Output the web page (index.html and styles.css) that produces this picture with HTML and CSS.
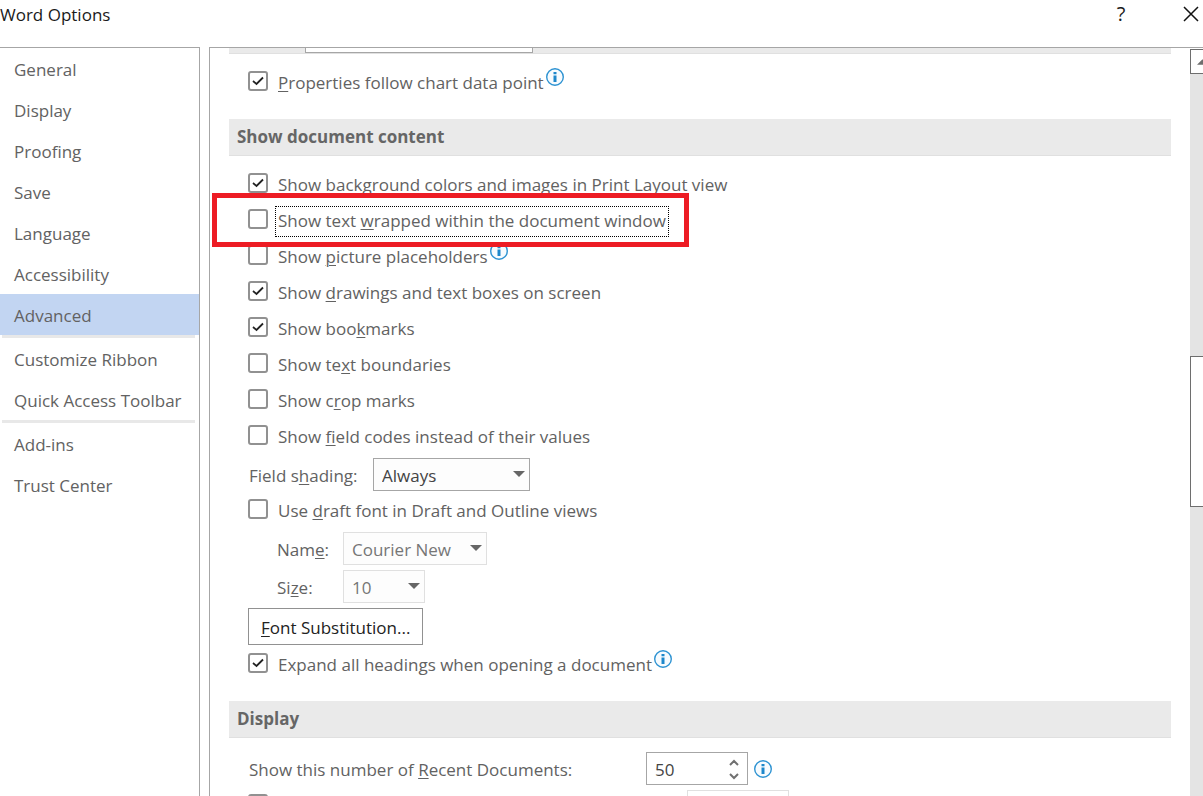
FILE: index.html
```html
<!DOCTYPE html>
<html lang="en">
<head>
	<meta charset="utf-8">
	<meta name="viewport" content="width=device-width, initial-scale=1">
	<title>Word Options</title>
	<link rel="stylesheet" href="styles.css">
</head>
<body>
	<!-- info icon, reused by every option that has a hint -->
	<svg class="defs" width="0" height="0" aria-hidden="true">
		<symbol id="info" viewBox="0 0 18 18">
			<circle cx="9" cy="9" r="8.3" fill="#f7fbfe" stroke="#2e93d2" stroke-width="1.4"/>
			<path d="M7.5 4h3v2.200h-3zM7.500 7.500h3v6.500h-3z" fill="#1e88cb"/>
		</symbol>
	</svg>

	<header class="titlebar">
		<h1 class="title">Word Options</h1>
		<button class="winbtn help" type="button" aria-label="Help">?</button>
		<button class="winbtn close" type="button" aria-label="Close">
			<svg width="16" height="16" viewBox="0 0 16 16"><path d="M1 1l14 14M15 1L1 15" stroke="#111" stroke-width="1.500" fill="none"/></svg>
		</button>
	</header>

	<div class="dialog">
		<!-- category list -->
		<nav class="sidebar">
			<a href="#general">General</a>
			<a href="#display">Display</a>
			<a href="#proofing">Proofing</a>
			<a href="#save">Save</a>
			<a href="#language">Language</a>
			<a href="#accessibility">Accessibility</a>
			<a href="#advanced" class="active">Advanced</a>
			<hr>
			<a href="#ribbon">Customize Ribbon</a>
			<a href="#toolbar">Quick Access Toolbar</a>
			<hr>
			<a href="#addins">Add-ins</a>
			<a href="#trust">Trust Center</a>
		</nav>

		<main class="panel">
			<div class="content">
				<!-- bottom edge of the previous section -->
				<div class="band"><div class="band-field"></div></div>
				<div class="row">
					<input type="checkbox" id="chart" checked>
					<label for="chart"><u>P</u>roperties follow chart data point</label>
					<svg class="info sup"><use href="#info"/></svg>
				</div>

				<h2>Show document content</h2>
				<div class="row">
					<input type="checkbox" id="background" checked>
					<label for="background">Show <u>b</u>ackground colors and images in Print Layout view</label>
				</div>
				<div class="row marked">
					<input type="checkbox" id="wrapped">
					<label for="wrapped" class="focused">Show text <u>w</u>rapped within the document window</label>
				</div>
				<div class="row">
					<input type="checkbox" id="picture">
					<label for="picture">Show <u>p</u>icture placeholders</label>
					<svg class="info sup"><use href="#info"/></svg>
				</div>
				<div class="row">
					<input type="checkbox" id="drawings" checked>
					<label for="drawings">Show <u>d</u>rawings and text boxes on screen</label>
				</div>
				<div class="row">
					<input type="checkbox" id="bookmarks" checked>
					<label for="bookmarks">Show boo<u>k</u>marks</label>
				</div>
				<div class="row">
					<input type="checkbox" id="boundaries">
					<label for="boundaries">Show te<u>x</u>t boundaries</label>
				</div>
				<div class="row">
					<input type="checkbox" id="crop">
					<label for="crop">Show c<u>r</u>op marks</label>
				</div>
				<div class="row">
					<input type="checkbox" id="codes">
					<label for="codes">Show <u>f</u>ield codes instead of their values</label>
				</div>
				<div class="field shading">
					<label for="shading">Field s<u>h</u>ading:</label>
					<span class="select"><select id="shading"><option>Always</option></select></span>
				</div>
				<div class="row">
					<input type="checkbox" id="draft">
					<label for="draft">Use <u>d</u>raft font in Draft and Outline views</label>
				</div>
				<div class="field indent">
					<label for="name">Nam<u>e</u>:</label>
					<span class="select name"><select id="name" disabled><option>Courier New</option></select></span>
				</div>
				<div class="field indent">
					<label for="size">Si<u>z</u>e:</label>
					<span class="select size"><select id="size" disabled><option>10</option></select></span>
				</div>
				<button class="font-btn" type="button"><u>F</u>ont Substitution...</button>
				<div class="row">
					<input type="checkbox" id="expand" checked>
					<label for="expand">Expand all headings when opening a document</label>
					<svg class="info sup"><use href="#info"/></svg>
				</div>

				<h2>Display</h2>
				<div class="field recent">
					<label for="recent">Show this number of <u>R</u>ecent Documents:</label>
					<span class="spinner">
						<input type="text" id="recent" value="50">
						<svg width="10" height="22" viewBox="0 0 10 22"><path d="M1 7l4-4 4 4M1 16l4 4 4-4" fill="none" stroke="#707070" stroke-width="2"/></svg>
					</span>
					<svg class="info"><use href="#info"/></svg>
				</div>
				<div class="row next">
					<input type="checkbox" id="quick" aria-label="Quick access">
					<input type="text" class="next-field" aria-label="Quick access count" disabled>
				</div>
			</div>

			<div class="scrollbar">
				<button class="arrow" type="button" aria-label="Scroll up">
					<svg width="12" height="6" viewBox="0 0 12 6"><path d="M0 6l6-6 6 6z" fill="#6e6e6e"/></svg>
				</button>
				<div class="track"><div class="thumb"></div></div>
			</div>
		</main>
	</div>
</body>
</html>
```

FILE: styles.css
```css
*, *::after {
	box-sizing: border-box;
}
body {
	margin: 0;
	height: 100vh;
	display: flex;
	flex-direction: column;
	overflow: hidden;
	background-color: #fff;
	color: #626262;
	font-family: "Open Sans", "Noto Sans", sans-serif;
	font-size: 17px;
	line-height: 24px;
}
button, select, input {
	font: inherit;
	color: inherit;
	margin: 0;
}
.defs {
	position: absolute;
}
u {
	text-decoration-thickness: 1px;
	text-underline-offset: 2px;
}

/* title bar */
.titlebar {
	display: flex;
	align-items: flex-start;
	flex: none;
	height: 47px;
	padding-top: 2px;
	color: #1a1a1a;
}
.title {
	flex: 1;
	margin: 0;
	padding-top: 1px;
	font-size: 17px;
	font-weight: normal;
}
.winbtn {
	width: 20px;
	height: 24px;
	padding: 0;
	border: 0;
	background: none;
}
.help {
	font-size: 20px;
}
.close {
	display: flex;
	align-items: center;
	justify-content: center;
	margin-left: 50px;
	margin-right: 2px;
}

/* sidebar */
.dialog {
	display: flex;
	flex: 1;
	gap: 9px;
	min-height: 0;
}
.sidebar {
	flex: none;
	width: 200px;
	border-top: 1px solid #a6a6a6;
	border-right: 1px solid #a6a6a6;
}
.sidebar a {
	display: block;
	padding: 10px 14px 7px;
	color: inherit;
	text-decoration: none;
	white-space: nowrap;
}
.sidebar .active {
	background-color: #c2d5f2;
}
.sidebar hr {
	height: 3px;
	margin: 0 4px 0 2px;
	border: 0;
	background-color: #e8e8e8;
}

/* options panel */
.panel {
	display: flex;
	flex: 1;
	min-width: 0;
	border-top: 1px solid #a6a6a6;
	border-left: 1px solid #a6a6a6;
	overflow: hidden;
}
.content {
	flex: 1;
	padding: 0 19px;
}
.band {
	height: 6px;
	margin-bottom: 9px;
	padding-left: 76px;
	background-color: #eaeaea;
	border-bottom: 1px solid #e0e0e0;
}
.band-field {
	width: 228px;
	height: 5px;
	background-color: #fff;
	border: 1px solid #a6a6a6;
	border-top: 0;
}
h2 {
	margin: 20px 0 9px;
	padding: 6px 8px;
	background-color: #eaeaea;
	border-bottom: 1px solid #e0e0e0;
	color: #666;
	font-size: 17px;
	font-weight: bold;
}
.row {
	display: flex;
	align-items: center;
	height: 36px;
	padding-left: 19px;
}
.row label {
	margin-left: 8px;
	padding: 4px 2px 0;
}
input[type=checkbox] {
	appearance: none;
	width: 20px;
	height: 20px;
	border: 2px solid #919191;
	border-radius: 3px;
	background: #fff center no-repeat;
}
input[type=checkbox]:checked {
	background-image: url("data:image/svg+xml,%3Csvg xmlns='http://www.w3.org/2000/svg' width='12' height='10'%3E%3Cpath d='M1 5l3.500 3L11 1.500' fill='none' stroke='%23222' stroke-width='1.800'/%3E%3C/svg%3E");
}
.info {
	width: 18px;
	height: 18px;
}
.sup {
	margin-bottom: 8px;
}
/* red frame round the highlighted option */
.marked {
	position: relative;
}
.marked::after {
	content: "";
	position: absolute;
	top: -8px;
	left: -17px;
	width: 477px;
	height: 54px;
	border: 5px solid #ed1c24;
}
.row .focused {
	margin-top: 4px;
	padding: 2px 2px 3px;
	outline: 1px dotted #000;
}

/* labelled fields */
.field {
	display: flex;
	align-items: center;
	margin-top: 5px;
	padding-left: 20px;
}
.field label {
	padding-top: 2px;
}
.indent {
	padding-left: 48px;
}
.indent label {
	width: 66px;
}
.shading label {
	width: 124px;
}
.select {
	position: relative;
	width: 157px;
}
.name {
	width: 144px;
}
.size {
	width: 82px;
}
.select::after {
	content: "";
	position: absolute;
	top: 13px;
	right: 5px;
	border: 6px solid transparent;
	border-top-color: #666;
	border-bottom: 0;
}
select {
	appearance: none;
	display: block;
	width: 100%;
	height: 33px;
	padding: 2px 8px 0;
	border: 1px solid #a6a6a6;
	border-radius: 0;
	background-color: #fdfdfd;
	color: #444;
}
select:disabled {
	border-color: #e0e0e0;
	color: #767676;
	opacity: 1;
}
.font-btn {
	display: block;
	height: 37px;
	margin: 5px 0 0 19px;
	padding: 2px 12px 0;
	border: 1px solid #919191;
	background-color: #fff;
	color: #222;
}
.recent {
	margin-top: 14px;
}
.recent label {
	width: 397px;
}
.spinner {
	display: flex;
	align-items: center;
	width: 102px;
	height: 33px;
	margin-right: 6px;
	padding: 0 8px;
	border: 1px solid #a6a6a6;
	color: #444;
}
.spinner input {
	flex: 1;
	min-width: 0;
	padding: 2px 0 0;
	border: 0;
}
.next {
	align-items: flex-start;
	padding-top: 9px;
}
.next-field {
	width: 102px;
	height: 33px;
	margin: -4px 0 0 419px;
	border: 1px solid #e0e0e0;
	background-color: #fff;
}

/* scrollbar */
.scrollbar {
	display: flex;
	flex-direction: column;
	flex: none;
	width: 13px;
	padding-top: 1px;
	overflow: hidden;
}
.arrow {
	display: flex;
	align-items: center;
	flex: none;
	width: 25px;
	height: 25px;
	padding: 0 6px;
	border: 1px solid #6e6e6e;
	background-color: #fff;
}
.track {
	flex: 1;
	padding-top: 282px;
	background-color: #e4e4e4;
}
.thumb {
	width: 25px;
	height: 151px;
	border: 1px solid #6e6e6e;
	background-color: #fff;
}
```
